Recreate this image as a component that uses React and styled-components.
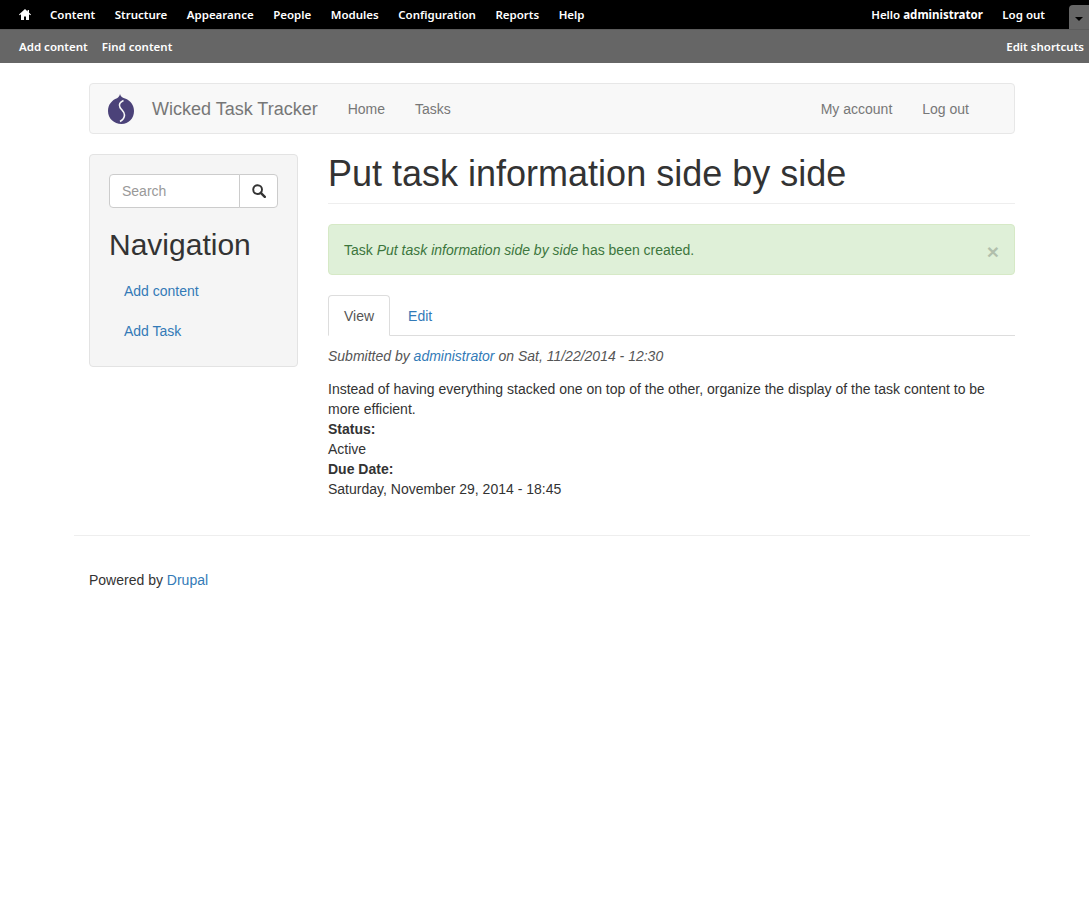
import React from 'react';
import styled, { createGlobalStyle } from 'styled-components';

const adminLinks = ['Content', 'Structure', 'Appearance', 'People', 'Modules', 'Configuration', 'Reports', 'Help'];

const App = () => (
  <>
    <GlobalStyle />
    <Toolbar>
      <HomeLink href="#">
        <svg width="12" height="11" viewBox="0 0 12 11">
          <path d="M6 0 L0 5.6 L0.7 6.3 L2 5.2 L2 11 L5 11 L5 7.5 L7 7.5 L7 11 L10 11 L10 5.2 L11.3 6.3 L12 5.6 L10 3.8 L10 1 L8.6 1 L8.6 2.5 Z" fill="#fff" />
        </svg>
      </HomeLink>
      <AdminMenu>
        {adminLinks.map(link => (
          <AdminLink key={link} href="#">{link}</AdminLink>
        ))}
      </AdminMenu>
      <UserMenu>
        <Hello>Hello <b>administrator</b></Hello>
        <AdminLink href="#">Log out</AdminLink>
      </UserMenu>
      <ToggleTab><Caret /></ToggleTab>
    </Toolbar>
    <Shortcuts>
      <ShortcutGroup>
        <ShortcutLink href="#">Add content</ShortcutLink>
        <ShortcutLink href="#">Find content</ShortcutLink>
      </ShortcutGroup>
      <ShortcutLink href="#">Edit shortcuts</ShortcutLink>
    </Shortcuts>

    <Page>
      <Navbar>
        <Logo viewBox="0 0 26 30">
          <path d="M12 0 C12.5 2.5 14 3.5 17 4.5 C22.5 6.5 26 11 26 17 C26 24.5 20.5 30 13.5 30 C6 30 0 24.5 0 17 C0 10.5 4 6 9 4.2 C10.5 3.5 11.5 2 12 0 Z" fill="#4b4279" />
          <path d="M15.5 6.5 C12 8 10.5 10.5 12 13.5 C13.5 16 16.5 17.5 16.5 21 C16.5 24 14.5 26 12 27.5" fill="none" stroke="#f8f8f8" strokeWidth="1.6" />
        </Logo>
        <Brand href="#">Wicked Task Tracker</Brand>
        <NavLink href="#">Home</NavLink>
        <NavLink href="#">Tasks</NavLink>
        <NavRight>
          <NavLink href="#">My account</NavLink>
          <NavLink href="#">Log out</NavLink>
        </NavRight>
      </Navbar>

      <Columns>
        <Sidebar>
          <SearchGroup>
            <SearchInput placeholder="Search" />
            <SearchButton type="button" aria-label="Search">
              <svg width="14" height="14" viewBox="0 0 14 14">
                <circle cx="5.6" cy="5.6" r="4.4" fill="none" stroke="#333" strokeWidth="1.9" />
                <path d="M8.8 8.8 L12.8 12.8" stroke="#333" strokeWidth="2.4" strokeLinecap="round" />
              </svg>
            </SearchButton>
          </SearchGroup>
          <SideTitle>Navigation</SideTitle>
          <SideLink href="#">Add content</SideLink>
          <SideLink href="#">Add Task</SideLink>
        </Sidebar>

        <Main>
          <Title>Put task information side by side</Title>
          <Alert>
            <span>Task <em>Put task information side by side</em> has been created.</span>
            <Close>×</Close>
          </Alert>
          <Tabs>
            <Tab $active>View</Tab>
            <Tab>Edit</Tab>
          </Tabs>
          <Submitted>
            Submitted by <Link href="#">administrator</Link> on Sat, 11/22/2014 - 12:30
          </Submitted>
          <Body>
            Instead of having everything stacked one on top of the other, organize the display of the task content to be more efficient.
          </Body>
          <FieldLabel>Status:</FieldLabel>
          <div>Active</div>
          <FieldLabel>Due Date:</FieldLabel>
          <div>Saturday, November 29, 2014 - 18:45</div>
        </Main>
      </Columns>

      <Footer>
        Powered by <Link href="#">Drupal</Link>
      </Footer>
    </Page>
  </>
);

export default App;

const GlobalStyle = createGlobalStyle`
  * {
    box-sizing: border-box;
  }

  body {
    margin: 0;
    background: #fff;
    color: #333;
    font-family: "Liberation Sans", Arial, sans-serif;
    font-size: 14px;
    line-height: 20px;
  }

  a {
    text-decoration: none;
  }
`;

const Toolbar = styled.div`
  display: flex;
  align-items: center;
  height: 29px;
  background: #000;
  font-family: "Noto Sans", sans-serif;
  font-size: 11.5px;
  font-weight: 600;
  color: #fff;
`;

const HomeLink = styled.a`
  display: flex;
  margin: 0 19px 0 19px;
`;

const AdminMenu = styled.div`
  display: flex;
  gap: 19.5px;
`;

const AdminLink = styled.a`
  color: #fff;
`;

const UserMenu = styled.div`
  display: flex;
  gap: 19.5px;
  margin-left: auto;
  margin-right: 24px;
`;

const Hello = styled.span`
  b {
    font-weight: 700;
  }
`;

const ToggleTab = styled.div`
  display: flex;
  justify-content: center;
  align-self: flex-end;
  width: 20px;
  height: 24px;
  padding-top: 12px;
  background: #666;
  border-radius: 4px 0 0 0;
`;

const Caret = styled.span`
  width: 0;
  height: 0;
  border-left: 4px solid transparent;
  border-right: 4px solid transparent;
  border-top: 4px solid #000;
`;

const Shortcuts = styled.div`
  display: flex;
  align-items: center;
  justify-content: space-between;
  height: 34px;
  padding: 0 5px 0 19px;
  background: #666;
  border-top: 1px solid #5c5c5c;
  font-family: "Noto Sans", sans-serif;
  font-size: 11.5px;
  font-weight: 600;
`;

const ShortcutGroup = styled.div`
  display: flex;
  gap: 14px;
`;

const ShortcutLink = styled.a`
  color: #fff;
`;

const Page = styled.div`
  width: 956px;
  margin-left: 74px;
  padding-top: 20px;
`;

const Navbar = styled.nav`
  display: flex;
  align-items: center;
  height: 51px;
  margin: 0 15px 20px;
  padding-left: 18px;
  background: #f8f8f8;
  border: 1px solid #e7e7e7;
  border-radius: 4px;
`;

const Logo = styled.svg`
  width: 26px;
  height: 30px;
  margin-right: 18px;
`;

const Brand = styled.a`
  margin-right: 30px;
  color: #777;
  font-size: 18px;
`;

const NavLink = styled.a`
  margin-right: 30px;
  color: #777;
`;

const NavRight = styled.div`
  display: flex;
  margin-left: auto;
  margin-right: 15px;
`;

const Columns = styled.div`
  display: flex;
  gap: 30px;
  padding: 0 15px;
`;

const Sidebar = styled.aside`
  flex: none;
  align-self: flex-start;
  width: 209px;
  height: 213px;
  padding: 19px;
  background: #f5f5f5;
  border: 1px solid #e3e3e3;
  border-radius: 4px;
`;

const SearchGroup = styled.div`
  display: flex;
  height: 34px;
`;

const SearchInput = styled.input`
  flex: 1;
  min-width: 0;
  padding: 6px 12px;
  background: #fff;
  border: 1px solid #ccc;
  border-radius: 4px 0 0 4px;
  color: #555;
  font-family: inherit;
  font-size: 14px;

  &::placeholder {
    color: #999;
    opacity: 1;
  }
`;

const SearchButton = styled.button`
  display: flex;
  align-items: center;
  justify-content: center;
  width: 39px;
  margin-left: -1px;
  padding: 0;
  background: #fff;
  border: 1px solid #ccc;
  border-radius: 0 4px 4px 0;
`;

const SideTitle = styled.h2`
  margin: 20px 0 10px;
  color: #333;
  font-size: 30px;
  font-weight: 500;
  line-height: 33px;
`;

const SideLink = styled.a`
  display: block;
  padding: 10px 15px;
  color: #337ab7;
  font-size: 14px;
`;

const Main = styled.main`
  flex: 1;
  min-width: 0;
`;

const Title = styled.h1`
  margin: 0 0 20px;
  padding-bottom: 9px;
  border-bottom: 1px solid #eee;
  color: #333;
  font-size: 36px;
  font-weight: 500;
  line-height: 39.6px;
`;

const Alert = styled.div`
  display: flex;
  justify-content: space-between;
  height: 51px;
  margin-bottom: 20px;
  padding: 15px;
  background: #dff0d8;
  border: 1px solid #d6e9c6;
  border-radius: 4px;
  color: #3c763d;
`;

const Close = styled.span`
  margin-top: 1px;
  margin-right: 0;
  color: #000;
  font-size: 21px;
  font-weight: 700;
  line-height: 21px;
  opacity: 0.2;
`;

const Tabs = styled.div`
  display: flex;
  gap: 2px;
  height: 41px;
  border-bottom: 1px solid #ddd;
`;

const Tab = styled.a`
  height: 41px;
  padding: 10px 15px;
  border: 1px solid ${props => (props.$active ? '#ddd' : 'transparent')};
  border-bottom-color: ${props => (props.$active ? '#fff' : 'transparent')};
  border-radius: 4px 4px 0 0;
  background: ${props => (props.$active ? '#fff' : 'transparent')};
  color: ${props => (props.$active ? '#555' : '#337ab7')};
`;

const Submitted = styled.div`
  margin-top: 10px;
  margin-bottom: 13px;
  color: #555;
  font-style: italic;
`;

const Link = styled.a`
  color: #337ab7;
`;

const Body = styled.div``;

const FieldLabel = styled.div`
  font-weight: 700;
`;

const Footer = styled.footer`
  margin-top: 36px;
  padding: 34px 15px 0;
  border-top: 1px solid #eee;
`;
